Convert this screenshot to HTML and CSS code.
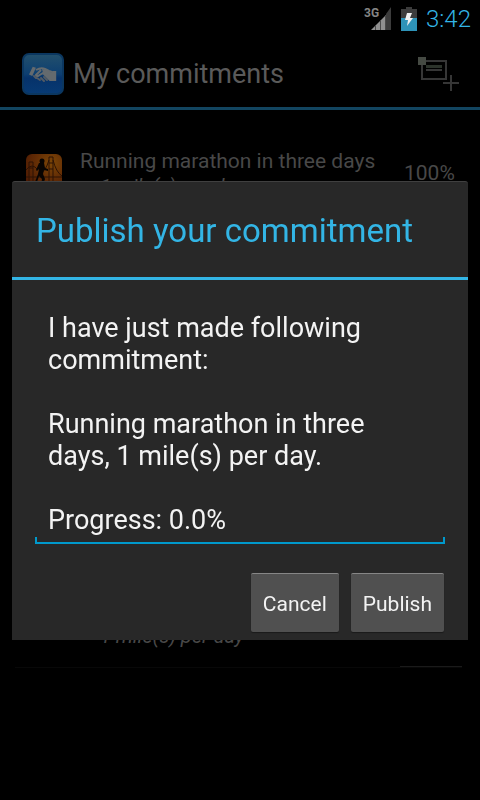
FILE: index.html
```html
<!DOCTYPE html>
<html lang="en">
<head>
    <meta charset="UTF-8">
    <meta name="viewport" content="width=device-width, initial-scale=1.0">
    <title>My commitments</title>
    <link rel="stylesheet" href="styles.css">
</head>
<body>
    <div class="status-bar">
        <svg class="signal-icon" width="28" height="26" viewBox="0 0 28 26" role="img" aria-label="3G signal">
            <text class="signal-label" x="0" y="11">3G</text>
            <path fill="#909090" d="M7 24 22 9V24z"/>
            <path fill="#3c3c3c" d="M22 8 27 1V24H22z"/>
            <path stroke="#4a4a4a" d="M11.500 19v5M16.500 14v10M21.500 9v15"/>
        </svg>
        <svg class="battery-icon" width="16" height="24" viewBox="0 0 16 24" role="img" aria-label="Battery charging">
            <path fill="#3c3c3c" d="M5 0h6v2h5v9H0V2h5z"/>
            <path fill="#2e93b8" d="M0 11h16v13H0z"/>
            <path fill="#f0f0f0" d="M6 6h5l-2 5h3L6 19l1-6H4z"/>
        </svg>
        <span class="clock">3:42</span>
    </div>

    <header class="action-bar">
        <svg class="app-icon" width="42" height="42" viewBox="0 0 42 42" aria-hidden="true">
            <defs>
                <linearGradient id="app-blue" x1="0" y1="0" x2="0" y2="1">
                    <stop offset="0" stop-color="#23506c"/>
                    <stop offset="0.5" stop-color="#0d3f71"/>
                    <stop offset="0.6" stop-color="#06326a"/>
                    <stop offset="1" stop-color="#073a74"/>
                </linearGradient>
            </defs>
            <rect x="1" y="1" width="40" height="40" rx="6" fill="url(#app-blue)" stroke="#0b3760" stroke-width="2"/>
            <path fill="#646a6e" d="M10.700 13.700l3.200 1-3.600 8.300-3.300-1.500zM31 18h3.200v10H31z"/>
            <path fill="none" stroke="#646a6e" stroke-width="2" d="M14 17q5-3 9-1l4 2 3 1v8h-2l-7-7-5 3q-2 0-2-1l5-5"/>
            <path fill="#646a6e" d="M20 16l5 1 5 3v7l-3-1-6-6z"/>
            <path fill="none" stroke="#525b64" stroke-width="2" stroke-linecap="round" d="M12 23l2 2M15 25l3 2M19 25l3 3M22 24l3 3"/>
        </svg>
        <h1 class="app-title">My commitments</h1>
        <button type="button" class="add-btn" aria-label="Add commitment">
            <svg width="42" height="36" viewBox="0 0 42 36" fill="none" stroke="#363636" stroke-width="2">
                <path d="M4 5h24v18H4z"/>
                <path stroke="#2c332b" stroke-width="3" d="M8 10.500h16"/>
                <path d="M8 14h16"/>
                <path d="M33 19v16M25 27h16"/>
                <path fill="#454a43" stroke="none" d="M0 1h8v8H0z"/>
            </svg>
        </button>
    </header>

    <main>
        <ul class="commitments">
            <li class="commitment">
                <svg class="commitment-icon" width="36" height="36" viewBox="0 0 36 36" aria-hidden="true">
                    <defs>
                        <radialGradient id="sunset" cx="0.7" cy="0.25" r="0.9">
                            <stop offset="0" stop-color="#7c4606"/>
                            <stop offset="0.5" stop-color="#622c05"/>
                            <stop offset="1" stop-color="#481602"/>
                        </radialGradient>
                    </defs>
                    <rect width="36" height="36" rx="6" fill="url(#sunset)"/>
                    <path fill="none" stroke="#2c1204" d="M3 8v20M7 8v20M3 8h4M3 14h4M0 16Q6 8 12 16M23 3v25M27 3v25M23 3h4M23 9h4M23 15h4M27 6Q30 18 36 22M23 6Q20 17 12 22M0 23h36"/>
                    <circle cx="16" cy="7" r="2.500" fill="#080402"/>
                    <path fill="#080402" d="M13 9h5l1 5 3 1v2l-4-1-1 4 2 5-2 6h-2l1-6-3-3-2 6H9l3-8 1-5-2 2-1-1z"/>
                </svg>
                <div class="commitment-text">
                    <span class="commitment-name">Running marathon in three days</span>
                    <em class="commitment-detail">1 mile(s) per day</em>
                </div>
                <span class="commitment-progress">100%</span>
            </li>
            <li class="commitment last">
                <div class="commitment-text">
                    <em class="commitment-detail">1 mile(s) per day</em>
                </div>
                <span class="commitment-progress"></span>
            </li>
        </ul>
    </main>

    <div class="overlay">
        <form class="dialog" role="dialog" aria-labelledby="dialog-title">
            <h2 class="dialog-title"><label id="dialog-title" for="message">Publish your commitment</label></h2>
            <div class="dialog-body">
                <textarea id="message" class="message" rows="7" spellcheck="false">I have just made following commitment:

Running marathon in three days, 1 mile(s) per day.

Progress: 0.0%</textarea>
            </div>
            <div class="dialog-buttons">
                <button type="button" class="btn">Cancel</button>
                <button type="button" class="btn">Publish</button>
            </div>
        </form>
    </div>
</body>
</html>
```

FILE: styles.css
```css
* {
    box-sizing: border-box;
}
body {
    margin: 0;
    min-height: 100vh;
    background-color: #000;
    color: #5a5a5a;
    font-family: Roboto, "Liberation Sans", sans-serif;
}
h1, h2, ul {
    margin: 0;
    padding: 0;
    font-weight: normal;
}
button, textarea {
    font-family: inherit;
}
.status-bar {
    display: flex;
    justify-content: flex-end;
    align-items: center;
    height: 38px;
    padding-right: 9px;
    gap: 9px;
}
.signal-label {
    fill: #858585;
    font-size: 12px;
    font-weight: bold;
}
.clock {
    color: #33b5e5;
    font-size: 24px;
    font-weight: 300;
    line-height: 38px;
}
.action-bar {
    display: flex;
    align-items: center;
    height: 72px;
    padding: 3px 20px 0 22px;
    gap: 9px;
    border-bottom: 3px solid #124560;
}
.app-title {
    flex: 1;
    font-size: 27px;
    line-height: 32px;
}
.add-btn {
    padding: 0;
    border: 0;
    background: none;
    cursor: pointer;
}
.add-btn svg {
    display: block;
}
.commitments {
    display: grid;
    grid-template-rows: repeat(6, 90px);
    padding: 18px 18px 0 15px;
    list-style: none;
}
.commitment {
    display: flex;
    align-items: stretch;
    border-bottom: 1px solid #080808;
    color: #484848;
    font-size: 21px;
    line-height: 25px;
}
.commitment.last {
    grid-row: 6;
}
.commitment-icon {
    margin: 26px 18px 0 11px;
}
.commitment-text {
    display: flex;
    flex: 1;
    flex-direction: column;
    justify-content: flex-end;
    padding-bottom: 18px;
}
.commitment-detail {
    padding-left: 20px;
    font-size: 20px;
}
.commitment.last .commitment-detail {
    padding-left: 85px;
}
.commitment-progress {
    flex: 0 0 62px;
    padding: 33px 0 0 4px;
    border-bottom: 1px solid #1a1a1a;
}
.overlay {
    position: fixed;
    inset: 0;
    padding: 181px 12px 12px;
}
.dialog {
    border-top: 1px solid #404040;
    border-radius: 3px 3px 0 0;
    background-color: #282828;
}
.dialog-title {
    padding: 29px 24px 26px;
    border-bottom: 3px solid #33b5e5;
    color: #33b5e5;
    font-size: 33px;
    line-height: 40px;
}
.dialog-body {
    padding: 24px 23px 0;
}
.message {
    display: block;
    width: 100%;
    padding: 8px 13px;
    border: 0;
    outline: 0;
    resize: none;
    overflow: hidden;
    background-color: transparent;
    background-image:
        linear-gradient(#0099cc, #0099cc),
        linear-gradient(#0099cc, #0099cc),
        linear-gradient(#0099cc, #0099cc);
    background-position: left bottom, left bottom, right bottom;
    background-repeat: no-repeat;
    background-size: 100% 2px, 2px 7px, 2px 7px;
    color: #f3f3f3;
    font-size: 27px;
    line-height: 32px;
}
.dialog-buttons {
    display: flex;
    justify-content: flex-end;
    padding: 29px 24px 8px;
    gap: 12px;
}
.btn {
    height: 59px;
    padding: 2px 12px 0;
    border: 0;
    border-top: 1px solid #868686;
    border-radius: 2px;
    background-color: #505050;
    box-shadow: 0 1px 1px #1a1a1a;
    color: #f3f3f3;
    font-size: 21px;
    cursor: pointer;
}
```
